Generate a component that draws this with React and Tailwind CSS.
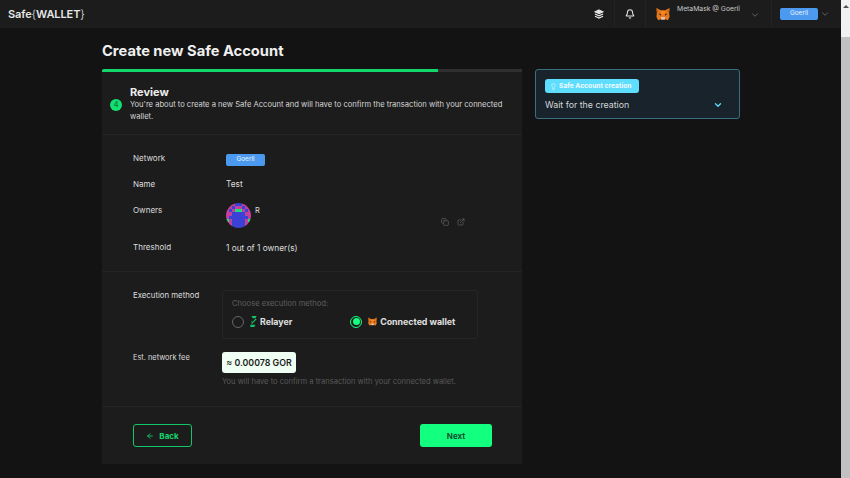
import React from 'react';
import { Bell, ChevronDown, Copy, ExternalLink, Lightbulb, ArrowLeft } from 'lucide-react';

const font = { fontFamily: 'Inter, "Liberation Sans", sans-serif' };

// Small 8x8 blockie: p pink, b blue, g green
const BLOCKIE = [
  'pppbbppp',
  'ppbppbpp',
  'pbpggpbp',
  'ppbbbbpp',
  'pbbbbbbp',
  'gpbbbbpg',
  'ppbbbbpp',
  'bpbbbbpb',
];
const BLOCK_COLORS = { p: '#c2409c', b: '#3b41d6', g: '#1fdc78' };

const Blockie = () => (
  <svg viewBox="0 0 8 8" className="h-[25px] w-[25px] rounded-full" shapeRendering="crispEdges">
    {BLOCKIE.map((row, y) =>
      row.split('').map((c, x) => <rect key={x + '-' + y} x={x} y={y} width="1" height="1" fill={BLOCK_COLORS[c]} />)
    )}
  </svg>
);

const Fox = ({ className }) => (
  <svg viewBox="0 0 16 15" className={className}>
    <polygon points="0.5,0.5 6,3.5 10,3.5 15.5,0.5 15,6 15.5,11 13.5,14.5 10.5,13.5 5.5,13.5 2.5,14.5 0.5,11 1,6" fill="#e8781c" />
    <polygon points="6,3.5 10,3.5 11,7 8,9 5,7" fill="#f6851b" />
    <polygon points="3,7 6,7.5 5,9.5" fill="#3a2a1d" />
    <polygon points="13,7 10,7.5 11,9.5" fill="#3a2a1d" />
    <polygon points="5.5,11 10.5,11 10,14 6,14" fill="#d7c1b3" />
    <polygon points="0.5,0.5 3,5 1,6" fill="#b5601a" />
    <polygon points="15.5,0.5 13,5 15,6" fill="#b5601a" />
  </svg>
);

const StackIcon = () => (
  <svg viewBox="0 0 16 16" className="h-[10px] w-[10px]" fill="none" stroke="#e4e4e4" strokeWidth="1.8">
    <path d="M8 1.5 14.5 4.5 8 7.5 1.5 4.5Z" fill="#e4e4e4" />
    <path d="M1.5 8 8 11 14.5 8" />
    <path d="M1.5 11.5 8 14.5 14.5 11.5" />
  </svg>
);

const RelayIcon = () => (
  <svg viewBox="0 0 8 14" className="h-[11px] w-[7px]" fill="#12c566">
    <path d="M1.5 0H8L6.5 3H3Z" />
    <path d="M6.5 3.5 8 4 2.5 10 1 9.5Z" />
    <path d="M2 6 3 6.5 0.5 9Z" />
    <path d="M0 11H6.5L5 14H0Z" />
  </svg>
);

const Radio = ({ checked }) => (
  <span
    className={
      checked
        ? 'flex h-[12px] w-[12px] items-center justify-center rounded-full border-[1.5px] border-[#12ff80]'
        : 'flex h-[12px] w-[12px] items-center justify-center rounded-full border-[1.5px] border-[#636669]'
    }
  >
    {checked && <span className="h-[7px] w-[7px] rounded-full bg-[#12ff80]" />}
  </span>
);

const NetworkPill = ({ className }) => (
  <div className={'flex items-center justify-center rounded-[2px] bg-[#4c9af0] text-[6.5px] text-[#e8f2ff] ' + className}>Goerli</div>
);

const Row = ({ label, className, children }) => (
  <div className={'flex ' + className}>
    <div className="w-[93px] shrink-0 text-[8px] leading-[10px] text-[#dcdcdc]">{label}</div>
    {children}
  </div>
);

export default function App() {
  return (
    <div style={font} className="flex h-[478px] w-[850px] overflow-hidden bg-[#121312]">
      <div className="flex w-[841px] flex-col">
        {/* top bar */}
        <header className="flex h-[28px] shrink-0 items-center bg-[#1c1c1c] pl-[8px]">
          <div className="text-[11px] font-semibold tracking-[-0.1px] text-[#e6e6e6]">
            Safe<span className="font-light">{'{'}</span>WALLET<span className="font-light">{'}'}</span>
          </div>
          <div className="ml-auto flex h-full items-center">
            <div className="flex h-full w-[31px] items-center justify-center border-r border-[#232323]">
              <StackIcon />
            </div>
            <div className="flex h-full w-[31px] items-center justify-center border-r border-[#232323]">
              <Bell size={10} strokeWidth={2.5} color="#e4e4e4" />
            </div>
            <div className="relative flex h-full w-[126px] items-center border-r border-[#232323] pl-[10px]">
              <Fox className="h-[14px] w-[14px]" />
              <div className="mb-[9px] ml-[7px] whitespace-nowrap text-[6.8px] text-[#c9c9c9]">MetaMask @ Goerli</div>
              <ChevronDown size={10} color="#6f6f6f" className="absolute right-[11px] top-[10px]" />
            </div>
            <div className="flex h-full w-[69px] items-center pl-[8px]">
              <NetworkPill className="h-[12px] w-[38px]" />
              <ChevronDown size={10} color="#6f6f6f" className="ml-[2px]" />
            </div>
          </div>
        </header>

        {/* page body */}
        <main className="pl-[102px]">
          <h1 className="mt-[14px] h-[27px] text-[14.7px] font-bold leading-[18px] text-[#efefef]">Create new Safe Account</h1>
          <div className="flex items-start gap-[13px]">
            <section className="w-[420px] bg-[#1c1c1c]">
              <div className="h-[3px] bg-[#303030]">
                <div className="h-[3px] w-[80%] rounded-tl-[2px] bg-[#12d86c]" />
              </div>

              <div className="flex h-[63px] border-b border-[#242424] pl-[8px] pt-[13px]">
                <div className="mt-[14px] flex h-[12px] w-[12px] items-center justify-center rounded-full bg-[#12e070] text-[7px] font-semibold text-[#0b7a3f]">4</div>
                <div className="ml-[8px] w-[378px]">
                  <div className="text-[11px] font-bold leading-[14px] text-[#ededed]">Review</div>
                  <p className="text-[7.6px] leading-[11.5px] text-[#d6d6d6]">
                    You're about to create a new Safe Account and will have to confirm the transaction with your connected wallet.
                  </p>
                </div>
              </div>

              <div className="h-[137px] border-b border-[#242424] pl-[31px] pt-[18px]">
                <Row label="Network" className="h-[26px]">
                  <NetworkPill className="mt-[1px] h-[12px] w-[39px]" />
                </Row>
                <Row label="Name" className="h-[26px]">
                  <div className="mt-[-1px] text-[8.3px] leading-[12px] text-[#dedede]">Test</div>
                </Row>
                <Row label="Owners" className="h-[37px]">
                  <div className="-mt-[2px] flex">
                    <Blockie />
                    <span className="ml-[4px] mt-[3px] text-[7.5px] leading-[10px] text-[#dcdcdc]">R</span>
                    <div className="ml-[181px] mt-[15px] flex gap-[8px]">
                      <Copy size={8} color="#666" />
                      <ExternalLink size={8} color="#666" />
                    </div>
                  </div>
                </Row>
                <Row label="Threshold" className="h-[12px]">
                  <div className="text-[8.3px] leading-[12px] text-[#dedede]">1 out of 1 owner(s)</div>
                </Row>
              </div>

              <div className="h-[135px] border-b border-[#242424] pl-[31px] pt-[18px]">
                <div className="flex">
                  <div className="w-[89px] shrink-0 text-[7.8px] leading-[10px] text-[#dcdcdc]">Execution method</div>
                  <div className="h-[49px] w-[256px] rounded-[3px] border border-[#262626] pl-[9px] pt-[8px]">
                    <div className="text-[7.6px] leading-[10px] text-[#5f5f5f]">Choose execution method:</div>
                    <div className="mt-[6px] flex items-center">
                      <Radio />
                      <span className="ml-[6px]"><RelayIcon /></span>
                      <span className="ml-[3px] text-[8.8px] font-bold text-[#e0e0e0]">Relayer</span>
                      <span className="ml-[58px]"><Radio checked /></span>
                      <Fox className="ml-[6px] h-[9px] w-[9px]" />
                      <span className="ml-[3px] text-[8.8px] font-bold text-[#e0e0e0]">Connected wallet</span>
                    </div>
                  </div>
                </div>
                <div className="mt-[13px] flex">
                  <div className="w-[89px] shrink-0 pt-[1px] text-[7.4px] leading-[10px] text-[#dcdcdc]">Est. network fee</div>
                  <div>
                    <div className="flex h-[21px] w-[74px] items-center justify-center whitespace-nowrap rounded-[3px] bg-[#effff4] text-[8.8px] font-semibold text-[#1c1c1c]">≈ 0.00078 GOR</div>
                    <div className="mt-[4px] whitespace-nowrap text-[7.55px] leading-[10px] text-[#5a5a5a]">You will have to confirm a transaction with your connected wallet.</div>
                  </div>
                </div>
              </div>

              <div className="flex h-[57px] items-center justify-between pl-[31px] pr-[30px]">
                <button className="flex h-[23px] w-[59px] items-center justify-center gap-[5px] rounded-[3px] border border-[#12c566] text-[8px] font-bold text-[#12d86c]">
                  <ArrowLeft size={8} strokeWidth={2.5} />
                  Back
                </button>
                <button className="h-[23px] w-[72px] rounded-[3px] bg-[#12ff80] text-[8px] font-bold text-[#14502e]">Next</button>
              </div>
            </section>

            <aside className="h-[50px] w-[205px] rounded-[3px] border border-[#3a6f80] bg-[#18232b] pl-[9px] pt-[9px]">
              <div className="flex h-[14px] w-[94px] items-center gap-[2px] rounded-[3px] bg-[#5fddff] pl-[5px] text-[6.7px] font-bold text-[#effbff]">
                <Lightbulb size={7} strokeWidth={2} color="#effbff" className="shrink-0" />
                <span className="whitespace-nowrap">Safe Account creation</span>
              </div>
              <div className="mt-[5px] flex h-[14px] items-center pr-[16px]">
                <span className="text-[8.8px] text-[#d6d6d6]">Wait for the creation</span>
                <ChevronDown size={10} strokeWidth={3} color="#5fddff" className="ml-auto" />
              </div>
            </aside>
          </div>
        </main>
      </div>

      {/* browser scrollbar */}
      <div className="flex w-[9px] flex-col bg-[#f1f1f1]">
        <div className="flex h-[12px] items-center justify-center">
          <span className="h-0 w-0 border-x-[3px] border-b-[3px] border-x-transparent border-b-[#505050]" />
        </div>
        <div className="mt-[25px] w-full flex-1 bg-[#c1c1c1]" />
      </div>
    </div>
  );
}
